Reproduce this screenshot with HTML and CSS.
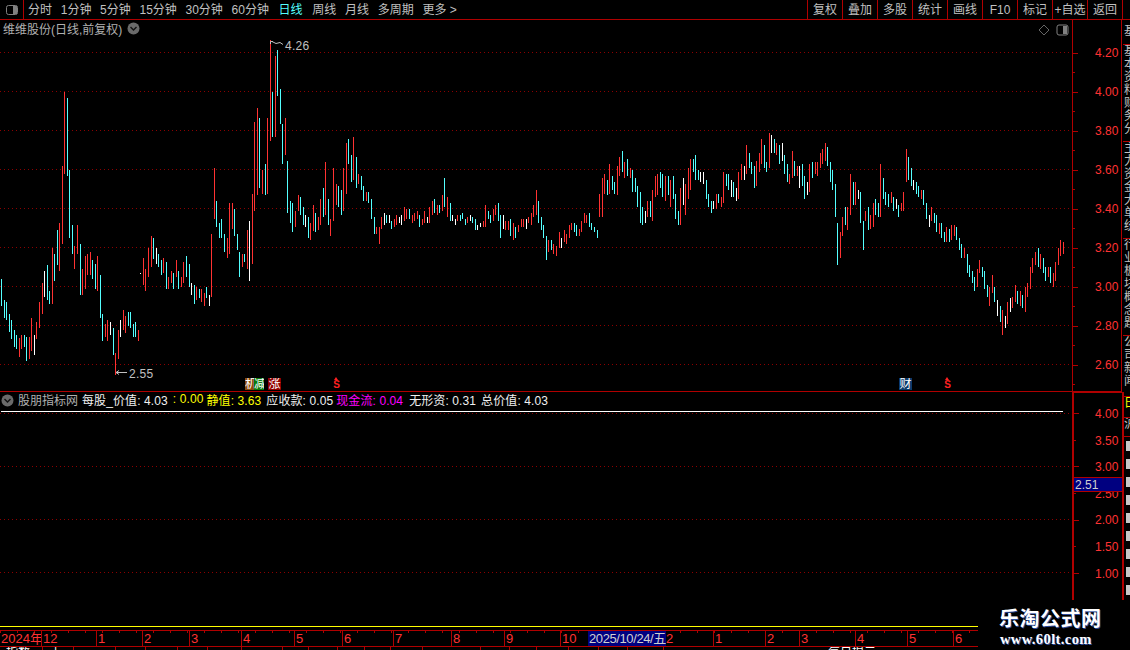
FILE: index.html
```html
<!DOCTYPE html>
<html>
<head>
    <title>维维股份</title>
    <link rel="stylesheet" href="styles.css">
</head>
<body>
    <div class="toolbar">
        <div class="panel-btn">
            <svg width="14" height="12" viewBox="0 0 14 12"><rect x="1.5" y="1.5" width="11" height="9" rx="2" class="icon-line"/><rect x="8" y="2" width="4" height="8" class="icon-fill"/></svg>
        </div>
        <div class="periods">
            <span>分时</span>
            <span>1分钟</span>
            <span>5分钟</span>
            <span>15分钟</span>
            <span>30分钟</span>
            <span>60分钟</span>
            <span class="active">日线</span>
            <span>周线</span>
            <span>月线</span>
            <span>多周期</span>
            <span>更多 &gt;</span>
        </div>
        <div class="actions">
            <span>复权</span>
            <span>叠加</span>
            <span>多股</span>
            <span>统计</span>
            <span>画线</span>
            <span>F10</span>
            <span>标记</span>
            <span>+自选</span>
            <span>返回</span>
        </div>
    </div>

    <div class="workspace">
        <div class="charts">
            <div class="price-pane">
                <svg class="chart" width="1072" height="371" viewBox="0 20 1072 371">
                    <path class="grid" d="M0 52.5H1072M0 91.5H1072M0 130.5H1072M0 169.5H1072M0 208.5H1072M0 247.5H1072M0 286.5H1072M0 325.5H1072M0 364.5H1072"/>
                    <path id="bars-red" class="bar-red"/>
                    <path id="bars-cyan" class="bar-cyan"/>
                    <path id="bars-white" class="bar-white"/>
                    <path class="leader" d="M270.5 44V41.5H273M272 41.5L276 43.5L280 42.5L283 44.5"/>
                    <text class="mark" x="285" y="50">4.26</text>
                    <path class="leader" d="M127 372.5H116M119 370.5L116 372.5L119 374.5"/>
                    <text class="mark" x="129" y="378">2.55</text>
                </svg>
                <div class="title-row">
                    <span>维维股份(日线,前复权)</span>
                    <svg class="chevron" width="13" height="13" viewBox="0 0 13 13"><circle cx="6.5" cy="6.5" r="6"/><path d="M3.5 5L6.5 8L9.5 5"/></svg>
                </div>
                <svg class="diamond" width="12" height="12" viewBox="0 0 12 12"><path d="M6 1L11 6L6 11L1 6Z"/></svg>
                <svg class="pane-toggle" width="13" height="12" viewBox="0 0 13 12"><rect x="1" y="1" width="11" height="10" rx="2" class="icon-line"/><rect x="7" y="2" width="4" height="8" class="icon-fill"/></svg>
                <div class="signal tag-ji">机</div>
                <div class="signal tag-jian">减</div>
                <div class="signal tag-zhang">涨</div>
                <div class="signal tag-s s-one">S</div>
                <div class="signal tag-cai">财</div>
                <div class="signal tag-s s-two">S</div>
            </div>
            <div class="indicator-pane">
                <svg class="chart" width="1072" height="234" viewBox="0 392 1072 234">
                    <path class="grid" d="M0 413.5H1072M0 466.5H1072M0 519.5H1072M0 572.5H1072"/>
                    <path class="value-line" d="M1 411.5H1063"/>
                </svg>
                <div class="legend">
                    <svg class="chevron" width="13" height="13" viewBox="0 0 13 13"><circle cx="6.5" cy="6.5" r="6"/><path d="M3.5 5L6.5 8L9.5 5"/></svg>
                    <span class="legend-name">股朋指标网</span>
                    <span class="legend-item">每股_价值: 4.03</span>
                    <span class="legend-item yellow tight">: 0.00</span>
                    <span class="legend-item yellow">静值: 3.63</span>
                    <span class="legend-item tight">应收款: 0.05</span>
                    <span class="legend-item magenta wide">现金流: 0.04</span>
                    <span class="legend-item">无形资: 0.31</span>
                    <span class="legend-item">总价值: 4.03</span>
                </div>
            </div>
        </div>

        <div class="axis">
            <div class="axis-price">
                <div class="tick">4.20</div>
                <div class="tick">4.00</div>
                <div class="tick">3.80</div>
                <div class="tick">3.60</div>
                <div class="tick">3.40</div>
                <div class="tick">3.20</div>
                <div class="tick">3.00</div>
                <div class="tick">2.80</div>
                <div class="tick">2.60</div>
            </div>
            <div class="axis-indicator">
                <div class="tick">4.00</div>
                <div class="tick minor">3.50</div>
                <div class="tick">3.00</div>
                <div class="tick minor">2.50</div>
                <div class="tick">2.00</div>
                <div class="tick minor">1.50</div>
                <div class="tick">1.00</div>
                <div class="cursor-value">2.51</div>
            </div>
        </div>

        <div class="side-strip">
            <div class="strip-cell h20">基</div>
            <div class="strip-cell h97">基<br>本<br>资<br>料<br>财<br>务<br>分</div>
            <div class="strip-cell h97">主<br>力<br>资<br>金<br>大<br>单<br>统</div>
            <div class="strip-cell h97">行<br>业<br>板<br>块<br>概<br>念<br>题</div>
            <div class="strip-cell h61">公<br>司<br>新<br>闻</div>
            <div class="strip-cell h21 yellow">日</div>
            <div class="strip-cell h19">沪</div>
            <div class="strip-blocks">
                <i></i><i></i><i></i><i></i><i></i><i></i><i></i><i></i><i></i>
            </div>
        </div>
    </div>

    <div class="bottom">
        <div class="yellow-rule"></div>
        <div class="months">
            <span>2024年</span>
            <span>12</span>
            <span>1</span>
            <span>2</span>
            <span>3</span>
            <span>4</span>
            <span>5</span>
            <span>6</span>
            <span>7</span>
            <span>8</span>
            <span>9</span>
            <span>10</span>
            <span class="cursor-date">2025/10/24/五</span>
            <span class="cut">2</span>
            <span>1</span>
            <span>2</span>
            <span>3</span>
            <span>4</span>
            <span>5</span>
            <span>6</span>
        </div>
        <div class="status-row">
            <span>指数</span><span>上</span><span></span><span></span><span></span><span></span><span></span><span></span><span></span><span></span><span></span><span></span><span></span><span></span><span></span><span></span><span></span><span></span><span></span><span></span><span></span><span class="status-tip">每日提示</span>
        </div>
    </div>

    <div class="watermark">
        <div class="wm-name">乐淘公式网</div>
        <div class="wm-url">www.60lt.com</div>
    </div>

    <script src="chart.js"></script>
</body>
</html>
```

FILE: styles.css
```css
body {
    margin: 0;
    width: 1130px;
    height: 650px;
    overflow: hidden;
    position: relative;
    background: #000;
    color: #c0c0c0;
    font-family: "Liberation Sans", "Noto Sans CJK SC", sans-serif;
    font-size: 12px;
}
svg {
    display: block;
}
.yellow {
    color: #ffff00;
}
.magenta {
    color: #ff00ff;
}
.icon-line {
    fill: none;
    stroke: #808080;
}
.icon-fill {
    fill: #808080;
}

/* top bar */
.toolbar {
    display: flex;
    height: 19px;
    border-bottom: 1px solid #b00000;
}
.panel-btn {
    width: 23px;
    border-right: 1px solid #b00000;
    display: flex;
    align-items: center;
    justify-content: center;
}
.periods {
    display: flex;
    gap: 8.7px;
    padding-left: 4px;
    line-height: 21px;
}
.periods .active {
    color: #54ffff;
    margin: 0 1px;
}
.actions {
    display: flex;
    margin-left: auto;
    margin-right: 7px;
    border-right: 1px solid #b00000;
}
.actions span {
    width: 34px;
    border-left: 1px solid #b00000;
    text-align: center;
    line-height: 21px;
    white-space: nowrap;
}

/* chart panes */
.workspace {
    display: flex;
    height: 606px;
}
.charts {
    width: 1072px;
}
.price-pane {
    position: relative;
    height: 371px;
    border-bottom: 1px solid #b00000;
}
.indicator-pane {
    position: relative;
    height: 234px;
}
.chart {
    position: absolute;
    left: 0;
    top: 0;
}
.grid {
    fill: none;
    stroke: #8c0000;
    stroke-dasharray: 1 3;
    shape-rendering: crispEdges;
}
.bar-red,
.bar-cyan,
.bar-white,
.value-line {
    fill: none;
    shape-rendering: crispEdges;
}
.bar-red {
    stroke: #ff3232;
}
.bar-cyan {
    stroke: #54ffff;
}
.bar-white,
.value-line {
    stroke: #fff;
}
.leader {
    fill: none;
    stroke: #c0c0c0;
}
.mark {
    fill: #c0c0c0;
    font-size: 12px;
    letter-spacing: 0.3px;
}
.title-row {
    position: relative;
    display: flex;
    align-items: center;
    gap: 5px;
    height: 17px;
    padding-left: 3px;
    color: #b0b0b0;
}
.chevron circle {
    fill: #6a6a6a;
}
.chevron path {
    fill: none;
    stroke: #111;
    stroke-width: 1.4;
}
.diamond {
    position: absolute;
    left: 1038px;
    top: 4px;
}
.diamond path {
    fill: none;
    stroke: #666;
}
.pane-toggle {
    position: absolute;
    left: 1056px;
    top: 4px;
}

/* signal tags under the candles */
.signal {
    position: absolute;
    top: 358px;
    height: 12px;
    line-height: 12px;
    text-align: center;
    color: #fff;
    font-size: 12px;
    overflow: hidden;
}
.tag-ji {
    left: 245px;
    width: 9px;
    background: #8a4a10;
}
.tag-jian {
    left: 254px;
    width: 10px;
    background: #0a7a0a;
}
.tag-zhang {
    left: 268px;
    width: 13px;
    background: #900000;
}
.tag-cai {
    left: 899px;
    width: 13px;
    background: #0a3a6a;
}
.tag-s {
    width: 7px;
    color: #ff2020;
    font-weight: bold;
    font-size: 10px;
    line-height: 10px;
    height: 11px;
    top: 360px;
    overflow: visible;
}
.tag-s::before {
    content: "";
    position: absolute;
    left: 1px;
    top: -3px;
    border-left: 2.5px solid transparent;
    border-right: 2.5px solid transparent;
    border-bottom: 3px solid #ff2020;
}
.s-one {
    left: 333px;
}
.s-two {
    left: 944px;
}

/* indicator legend */
.legend {
    position: relative;
    display: flex;
    align-items: center;
    height: 16px;
    padding-left: 1px;
    color: #f0f0f0;
    white-space: nowrap;
}
.legend-name {
    margin-left: 4px;
    margin-right: 4px;
    margin-top: -2px;
    color: #b0b0b0;
}
.legend-item {
    margin-top: -2px;
    margin-right: 5px;
    letter-spacing: 0.1px;
}
.legend-item.tight {
    margin-right: 3px;
}
.legend-item.wide {
    margin-right: 6px;
}

/* value axis */
.axis {
    width: 50px;
    position: relative;
    color: #ff3232;
}
.axis-price {
    height: 372px;
    box-sizing: border-box;
    padding-top: 13px;
    border-left: 1px solid #b00000;
    border-right: 1px solid #b00000;
    border-bottom: 1px solid #b00000;
}
.axis-price .tick {
    height: 39px;
    line-height: 41px;
}
.axis-indicator {
    position: relative;
    height: 208px;
    box-sizing: border-box;
    padding-top: 7px;
    width: 52px;
    border-top: 1px solid #b00000;
    border-left: 2px solid #b00000;
    border-right: 2px solid #b00000;
}
.axis-indicator .tick {
    height: 26.6px;
    line-height: 28.6px;
    padding-left: 21px;
}
.tick {
    position: relative;
    padding-left: 22px;
}
.tick::before {
    content: "";
    position: absolute;
    left: 0;
    top: 50%;
    width: 5px;
    border-top: 1px solid #b00000;
}
.tick.minor::before {
    width: 2px;
}
.axis-price .tick::after {
    content: "";
    position: absolute;
    left: 0;
    top: 100%;
    width: 2px;
    border-top: 1px solid #b00000;
}
.cursor-value {
    position: absolute;
    left: 0;
    top: 84px;
    width: 100%;
    height: 15px;
    line-height: 15px;
    padding-left: 1px;
    box-sizing: border-box;
    background: #000080;
    border-top: 1px solid #b00000;
    border-bottom: 1px solid #b00000;
    color: #d0d0d0;
}

/* clipped list along the right edge */
.side-strip {
    width: 7px;
    margin-left: 1px;
    overflow: hidden;
    padding-top: 5px;
    line-height: 13px;
    font-size: 12px;
}
.strip-cell {
    box-sizing: border-box;
    border-bottom: 1px solid #b00000;
    padding-left: 1px;
    overflow: hidden;
    white-space: nowrap;
}
.h20 {
    height: 20px;
}
.h97 {
    height: 97px;
}
.h61 {
    height: 61px;
}
.h21 {
    height: 21px;
}
.h19 {
    height: 19px;
}
.strip-blocks {
    display: flex;
    flex-direction: column;
    gap: 8px;
    padding: 4px 0 0 3px;
}
.strip-blocks i {
    display: block;
    height: 10px;
    background: #c8c8c8;
}

/* time axis */
.bottom {
    width: 978px;
    overflow: hidden;
}
.yellow-rule {
    height: 1px;
    background: #ffff00;
    margin-bottom: 3px;
}
.months {
    display: grid;
    grid-template-columns: 41px 55px 46px 47px 52px 53px 48px 51px 58px 53px 56px 28px 78px 47px 52px 34px 56px 52px 46px 25px;
    height: 15px;
    border-top: 1px solid #b00000;
    border-bottom: 1px solid #b00000;
    color: #ff3232;
    font-size: 13px;
    line-height: 15px;
    background: repeating-linear-gradient(90deg, #b00000 0 1px, transparent 1px 17px) top left / 100% 2px no-repeat;
}
.months span {
    border-left: 1px solid #b00000;
    padding-left: 1px;
    white-space: nowrap;
    overflow: hidden;
}
.months span:first-child {
    border-left: 0;
}
.months .cursor-date {
    border-left: 0;
    padding-left: 1px;
    background: #000080;
    color: #d0d0d0;
    letter-spacing: -0.4px;
}
.months .cut {
    border-left: 0;
    padding-left: 0;
}
.status-row {
    display: grid;
    grid-template-columns: 42px 31px 42px 30px 32px 30px 34px 41px 26px 29px 27px 26px 32px 58px 29px 27px 32px 30px 29px 36px 165px 150px;
    height: 3px;
    overflow: hidden;
    line-height: 12px;
    color: #fff;
}
.status-row span {
    border-left: 1px solid #b00000;
    padding-left: 7px;
    white-space: nowrap;
}
.status-row span:first-child {
    border-left: 0;
    padding-left: 6px;
}
.status-row .status-tip {
    border-left: 0;
    padding-left: 0;
}

/* site mark in the corner */
.watermark {
    position: absolute;
    right: 0;
    bottom: 0;
    width: 152px;
    height: 50px;
    background: #000;
    display: flex;
    flex-direction: column;
    padding: 8px 0 0 21px;
    box-sizing: border-box;
    color: #fff;
    font-weight: bold;
    text-shadow: 1px 1px 0 #2a4a9a;
}
.wm-name {
    font-size: 20px;
    line-height: 22px;
    letter-spacing: 0.5px;
}
.wm-url {
    font-family: "Liberation Serif", serif;
    font-size: 14.5px;
    line-height: 18px;
    letter-spacing: 0.4px;
    padding-left: 1px;
}
```

FILE: chart.js
```js
// bars read off the screenshot: x y1 y2 colour, in 3x crop coordinates
var regions = [
  [0, 80, "3 597 678 c,12 660 714 c,18 666 720 c,27 702 756 c,33 720 777 c,42 750 801 c,48 765 807 c,57 774 831 r,63 765 807 r,72 765 801 c,78 771 843 c,87 771 837 r,93 714 813 r,102 765 825 w,108 726 777 r,117 666 744 r,126 609 702 r,132 573 651 w,141 555 660 c,147 633 672 c,156 504 672 r,162 522 603 c,171 450 555 c,177 429 573 r,186 258 492 r,192 36 282 r,201 54 288 c,207 270 474 c,216 435 522 c,222 498 567 r,231 435 522 r,240 492 645 c,246 567 645 r,255 528 627 r,261 522 585 r,270 516 585 r,276 540 597 c,285 552 627 c,291 528 633 r,300 585 714 c,306 702 783 c,315 732 771 r,321 720 783 r,330 726 765 w,339 744 825 c,345 819 885 r,354 750 837 r,360 720 771 w,369 690 750 r,375 708 759 r,384 696 738 c,390 696 744 c,399 732 771 c,405 726 771 c,414 750 783 r,420 579 582 w,429 534 615 r,435 567 633 r,444 504 591 r,453 468 561 r,459 474 537 c,468 504 552 w,474 522 561 c,483 540 585 c,489 534 579 r,498 546 627 c,504 591 627 r,513 573 609 r,519 579 627 c,528 540 591 r,534 573 627 c,543 591 621 r,549 546 609 r,558 528 591 c,567 552 621 c,573 609 645 w,582 615 672 c,588 621 660 r,597 627 654 c,603 627 666 r,612 639 678 r,618 621 654 c,627 645 678 w,633 462 651 r,642 264 417 r,648 363 441 c,657 429 474 c,663 417 474 c,672 462 516 c,681 474 534 r,687 369 522 r,696 369 447 r,702 387 468 c,711 462 510 c,717 516 591 c,726 522 561 r,732 522 546 c,741 450 567 r,747 423 603 w,756 342 552 r,762 126 393 r,771 84 345 r,777 114 324 c,786 270 342 r,795 252 345 c,801 114 342 r,810 -120 183 r,816 36 171 c,825 -72 171 r,831 -90 48 c,840 27 132 c,846 132 252 c,855 114 225 r,861 243 399 c,870 363 429 c,876 369 456 c,885 393 441 r,894 345 393 r"],
  [280, 130, "60 201 255 c,69 231 285 c,75 255 291 w,84 261 324 c,90 279 330 r,99 225 303 r,105 249 306 c,114 261 300 r,120 207 285 r,129 174 261 c,135 96 255 r,144 207 285 c,150 267 318 r,159 114 273 r,168 162 225 r,174 168 231 c,183 180 255 c,189 114 243 r,198 39 192 r,204 27 102 c,213 75 156 c,219 21 150 r,228 81 174 c,234 132 162 r,243 138 180 c,249 168 213 c,258 186 213 r,264 186 219 c,273 207 267 c,282 261 312 c,288 291 312 r,297 291 342 r,303 261 297 r,312 249 285 w,318 255 279 c,327 255 279 w,333 273 297 c,342 267 291 r,348 255 285 r,357 261 279 w,363 255 285 w,372 231 273 r,378 237 267 r,387 237 267 c,396 255 279 r,402 249 273 r,411 243 267 r,417 255 291 c,426 267 285 r,432 243 279 r,441 261 279 w,447 231 279 r,456 213 255 r,462 207 249 c,471 225 255 r,477 225 249 c,486 195 243 r,492 144 231 c,501 201 261 r,510 219 273 c,516 255 273 w,525 267 285 w,531 255 273 r,540 255 273 c,546 249 267 c,555 267 285 c,561 261 279 r,570 255 273 w,576 261 279 c,585 267 300 c,591 285 300 w,600 279 291 w,609 273 291 r,615 225 291 r,624 243 267 c,630 255 279 c,639 237 273 r,645 225 255 r,654 219 273 c,660 255 324 c,669 255 297 w,675 273 300 r,684 273 300 r,690 267 318 c,699 279 330 r,705 291 324 c,714 285 306 r,723 267 291 r,729 267 291 r,738 267 297 w,744 261 279 r,753 249 285 r,759 225 261 r,768 180 255 r,774 213 279 c,783 261 300 c,789 285 324 c,798 318 390 c,804 330 366 r,813 330 360 c,819 342 372 r,828 348 378 r,837 306 354 r,843 324 354 w,852 300 336 r,858 312 342 r,867 285 324 r,873 279 300 r,882 279 306 c,888 285 318 c,897 297 318 r"],
  [580, 130, "3 273 306 r,12 249 279 r,18 255 279 r,27 249 291 c,33 279 300 c,42 291 306 c,51 300 324 c,57 192 261 r,66 144 261 r,72 132 192 r,81 150 195 c,87 102 192 r,96 138 180 c,102 156 192 c,111 108 195 r,117 81 138 r,126 63 126 c,132 96 144 r,141 87 138 c,150 114 144 r,156 120 186 c,165 144 186 c,171 168 231 c,180 186 279 c,186 231 285 c,195 243 279 w,201 213 261 r,210 213 261 c,216 180 273 r,225 138 201 r,231 132 195 r,240 126 174 c,246 132 201 c,255 138 213 r,264 138 195 c,270 150 231 r,279 138 207 c,285 192 267 c,294 243 285 c,300 174 285 r,309 144 225 w,315 162 255 r,324 114 207 r,330 87 180 r,339 87 126 c,345 75 150 c,354 120 150 c,360 126 156 w,369 126 162 w,378 150 207 c,384 192 231 c,393 213 249 c,399 213 237 w,408 192 237 r,414 192 219 c,423 201 231 r,429 126 219 r,438 132 168 c,444 132 180 c,453 150 201 w,459 156 201 c,468 174 213 w,474 126 207 r,483 102 150 r,492 108 150 w,498 45 132 r,507 69 114 c,513 96 132 c,522 108 174 c,528 93 168 r,537 69 126 r,543 27 102 r,552 45 114 c,558 96 126 c,567 9 114 r,573 15 69 w,582 27 69 c,588 39 75 r,597 45 102 c,606 39 93 w,612 75 132 c,621 102 156 c,627 132 162 r,636 63 144 r,642 93 138 c,651 108 138 r,657 108 174 w,666 102 168 c,672 138 207 c,681 156 195 w,687 102 186 r,696 96 144 c,705 96 132 r,711 96 138 r,720 69 114 r,726 57 102 r,735 39 93 r,741 51 108 c"],
  [830, 140, "0 66 126 c,6 90 150 c,15 132 231 c,21 249 375 c,30 276 354 r,36 231 288 r,45 201 255 c,51 201 270 r,60 102 225 r,69 126 195 c,75 126 195 r,84 150 177 w,90 156 249 c,99 243 330 c,105 213 243 r,114 201 270 c,120 225 267 r,129 189 261 r,135 177 225 c,144 189 231 c,150 72 231 r,159 114 177 c,165 156 195 c,174 162 201 c,183 156 189 r,189 171 213 c,198 177 207 w,204 195 231 c,213 189 213 r,219 156 213 r,228 27 126 r,234 51 120 c,243 84 138 c,249 120 150 w,258 126 162 c,264 138 171 c,273 150 177 r,279 150 195 c,288 189 237 c,297 225 261 w,303 201 243 r,312 219 249 c,318 225 276 c,327 249 282 r,333 249 294 c,342 276 306 c,348 261 306 r,357 267 306 c,363 255 300 r,372 255 288 r,378 261 300 c,387 294 330 c,393 312 354 c,402 324 354 r,411 342 399 c,417 375 411 c,426 393 429 c,432 411 453 c,441 387 441 r,447 360 399 r,456 381 411 c,462 393 447 c,471 435 471 c,477 441 498 r,486 405 459 r,492 441 486 c,501 480 528 w,510 498 546 c,516 510 585 r,525 528 564 w,531 486 552 r,540 474 516 w,546 471 504 r,555 435 486 r,561 453 492 c,570 453 498 r,576 465 504 c,585 441 516 r,591 429 471 r,600 381 447 r,606 354 399 r,615 336 375 r,624 324 381 c,630 342 387 r,639 354 399 c,645 381 423 c,654 381 411 r,660 381 429 c,669 399 441 r,675 366 423 r,684 324 375 r,690 300 348 r,699 306 342 r"]
];

var paths = { r: "", c: "", w: "" };

regions.forEach(function (region) {
  region[2].split(",").forEach(function (bar) {
    var p = bar.split(" ");
    var x = region[0] + Math.floor(p[0] / 3) + 0.5;
    var y1 = region[1] + Math.round(p[1] / 3);
    var y2 = region[1] + Math.round(p[2] / 3);
    paths[p[3]] += "M" + x + " " + y1 + "V" + y2;
  });
});

document.getElementById("bars-red").setAttribute("d", paths.r);
document.getElementById("bars-cyan").setAttribute("d", paths.c);
document.getElementById("bars-white").setAttribute("d", paths.w);
```
